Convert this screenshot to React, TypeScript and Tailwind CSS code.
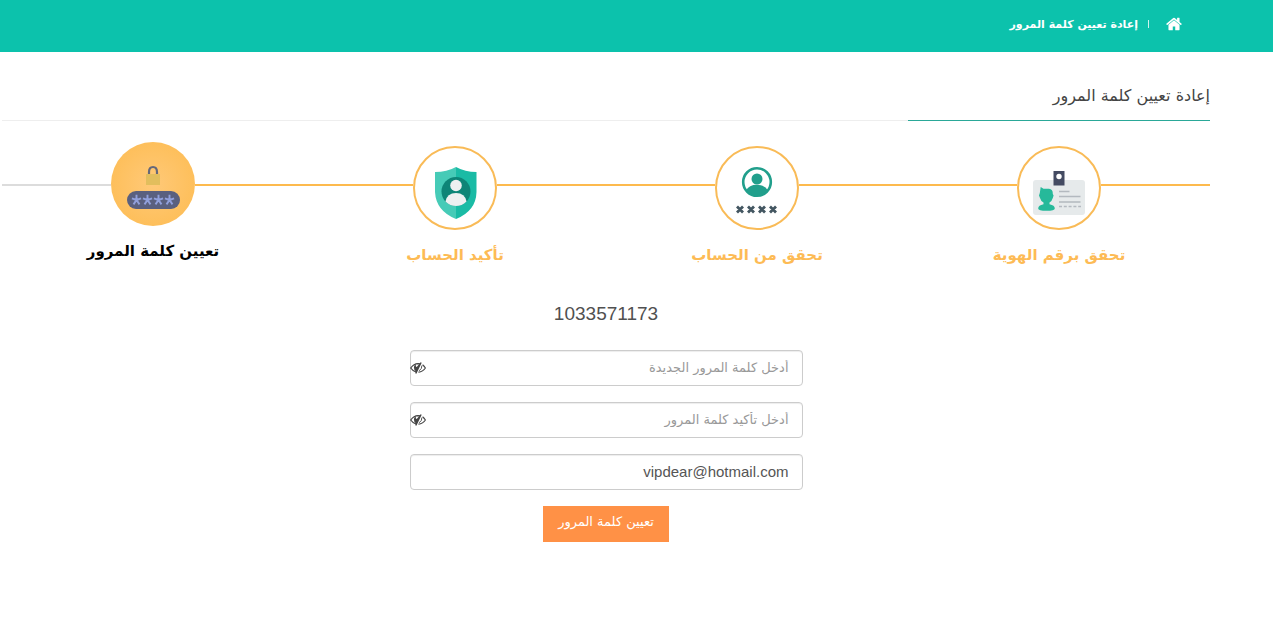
import { useState } from "react";
import type { ReactNode } from "react";

function HomeIcon() {
  return (
    <svg viewBox="64 64 1664 1664" className="size-4" fill="currentColor" aria-hidden="true">
      <path d="M1472 992v480q0 26-19 45t-45 19h-384v-384h-256v384h-384q-26 0-45-19t-19-45v-480q0-1 .5-3t.5-3l575-474 575 474q1 2 1 6zm223-69l-62 74q-8 9-21 11h-3q-13 0-21-7l-692-577-692 577q-12 8-24 7-13-2-21-11l-62-74q-8-10-7-23.500t11-21.500l719-599q32-26 76-26t76 26l244 204v-195q0-14 9-23t23-9h192q14 0 23 9t9 23v408l219 182q10 8 11 21.500t-7 23.500z" />
    </svg>
  );
}

function IdCardIcon() {
  return (
    <svg viewBox="2 2 80 80" className="size-full" aria-hidden="true">
      <rect x="16" y="34" width="52" height="35" rx="3" fill="#e6eaeb" />
      <rect x="36.500" y="25" width="11" height="14.500" fill="#444b62" />
      <circle cx="42" cy="30.500" r="2.700" fill="#fff" />
      <path
        d="M23.700 41 L26.500 42.800 H32 Q36 43.200 35.800 48 L36.600 49.500 L35.800 52 Q34.800 55.500 32.500 56.500 V58.300 Q37.800 59.300 37.800 62.500 Q37.800 64.800 29.500 64.800 Q21.200 64.800 21.200 62.500 Q21.200 59.300 26.500 58.300 V56.500 Q24 55.500 23 52 L22 49.500 L22.800 47 Z"
        fill="#26b99a"
      />
      <path d="M42 45.500 H52.500 M42 50.500 H63.500 M42 56 H63.500" stroke="#b3b9bf" strokeWidth="1.600" />
      <path d="M42 60.500 H64" stroke="#b3b9bf" strokeWidth="1.600" strokeDasharray="3 1.800" />
    </svg>
  );
}

function AccountIcon() {
  return (
    <svg viewBox="2 2 80 80" className="size-full" aria-hidden="true">
      <circle cx="42" cy="36" r="13.800" fill="#fff" stroke="#219f8c" strokeWidth="2.600" />
      <circle cx="42" cy="33" r="5.500" fill="#219f8c" />
      <path d="M31 44.500 Q34 38.800 42 38.800 Q50 38.800 53 44.500 Q48 50 42 50 Q36 50 31 44.500 Z" fill="#219f8c" />
      <path
        d="M22 60.500 L28 66.500 M28 60.500 L22 66.500 M33 60.500 L39 66.500 M39 60.500 L33 66.500 M44 60.500 L50 66.500 M50 60.500 L44 66.500 M55 60.500 L61 66.500 M61 60.500 L55 66.500"
        stroke="#435661"
        strokeWidth="2.800"
      />
    </svg>
  );
}

function ShieldIcon() {
  return (
    <svg viewBox="2 2 80 80" className="size-full" aria-hidden="true">
      <path d="M43 21 Q52 26 63.500 26 V46 Q63 65 43 73 Z" fill="#1abba5" />
      <path d="M43 21 Q34 26 22 26 V46 Q23 65 43 73 Z" fill="#46cbb7" />
      <circle cx="43" cy="45.500" r="14.500" fill="#0e8577" />
      <circle cx="43" cy="39.500" r="5.800" fill="#eef0f1" />
      <path d="M32.500 55.500 Q34 47 43 47 Q52 47 53.500 55.500 Q49 60 43 60 Q37 60 32.500 55.500 Z" fill="#eef0f1" />
    </svg>
  );
}

function Star({ x }: { x: number }) {
  return (
    <path
      d={`M${x} 58 V52.800 M${x} 58 L${x - 4.6} 56.300 M${x} 58 L${x + 4.6} 56.300 M${x} 58 L${x - 3} 62.400 M${x} 58 L${x + 3} 62.400`}
      stroke="#91a0dc"
      strokeWidth="1.900"
    />
  );
}

function PasswordIcon() {
  return (
    <svg viewBox="0 0 84 84" className="size-full" aria-hidden="true">
      <path d="M38 33 V30 Q38 25 42 25 Q46 25 46 30 V33" fill="none" stroke="#666879" strokeWidth="2.200" />
      <rect x="35" y="32" width="14" height="11" fill="#e2be5d" />
      <rect x="16" y="49" width="53" height="18" rx="9" fill="#5a607f" />
      <Star x={25.5} />
      <Star x={36.5} />
      <Star x={47.5} />
      <Star x={58.5} />
    </svg>
  );
}

function EyeOffIcon() {
  return (
    <svg viewBox="0 0 16 12" className="h-3 w-4" aria-hidden="true">
      <path d="M6.500 10.200 Q3 9.400 0.700 6 Q3.800 1.700 8 1.600 L10 1.900" fill="none" stroke="#444" strokeWidth="1.200" />
      <path d="M12.600 2.700 Q14.200 4 15.400 6 Q13 9.600 8.400 10.300" fill="none" stroke="#444" strokeWidth="1.100" />
      <path d="M10.600 0.200 L11.700 0.800 L6.400 11.800 L5.200 11.300 L5.900 9.200 Q3.800 8 3.900 5.300 Q4 3.300 5.700 2 L5.900 4.600 L6.700 5 L9.300 2 Z" fill="#444" />
      <path d="M11.800 3.600 Q12.400 6.800 8.900 8.900" fill="none" stroke="#444" strokeWidth="0.900" />
    </svg>
  );
}

type StepItem = { label: string; icon: ReactNode; active?: boolean };

const steps: StepItem[] = [
  { label: "تحقق برقم الهوية", icon: <IdCardIcon /> },
  { label: "تحقق من الحساب", icon: <AccountIcon /> },
  { label: "تأكيد الحساب", icon: <ShieldIcon /> },
  { label: "تعيين كلمة المرور", icon: <PasswordIcon />, active: true },
];

function Step({ label, icon, active }: StepItem) {
  return (
    <li className="flex flex-1 flex-col items-center" aria-current={active ? "step" : undefined}>
      <div className="flex w-full items-start">
        <span className="mt-[42px] h-0.5 flex-1 bg-[#fdba4d]" />
        <span
          className={
            active
              ? "size-[84px] rounded-full bg-[radial-gradient(circle,#ffc978,#fdbb4f)]"
              : "mt-1 size-[84px] rounded-full border-2 border-[#f9bb57] bg-white"
          }
        >
          {icon}
        </span>
        <span className={active ? "mt-[42px] h-0.5 flex-1 bg-[#dcdcdc]" : "mt-[42px] h-0.5 flex-1 bg-[#fdba4d]"} />
      </div>
      <span
        className={
          active
            ? "mt-[13px] text-[15px] leading-6 font-bold text-black"
            : "mt-[13px] text-[15px] leading-6 font-bold text-[#fdbb55]"
        }
      >
        {label}
      </span>
    </li>
  );
}

const inputClass =
  "h-9 w-full rounded-sm border border-[#ccc] bg-white px-[13px] pb-0.5 text-right leading-7 text-[#555] shadow-[inset_0_1px_1px_rgba(0,0,0,0.075)] outline-none placeholder:text-[#999]";

function PasswordField({ label }: { label: string }) {
  const [shown, setShown] = useState(false);
  return (
    <div className="relative">
      <input
        aria-label={label}
        type={shown ? "text" : "password"}
        placeholder={label}
        className={`${inputClass} text-[13px]`}
      />
      <button
        type="button"
        aria-label="إظهار كلمة المرور"
        onClick={() => setShown(!shown)}
        className="absolute inset-y-0 left-0 flex items-center"
      >
        <EyeOffIcon />
      </button>
    </div>
  );
}

export default function App() {
  return (
    <div dir="rtl" className="bg-white font-['DejaVu_Sans','Liberation_Sans',sans-serif] text-[#444]">
      <header className="flex h-13 items-center bg-[#0cc2ac] pr-[91px] pb-1 text-white">
        <a href="#home" aria-label="الرئيسية">
          <HomeIcon />
        </a>
        <span className="mr-[17px] ml-2.5 h-2 w-px bg-white/80" />
        <span className="pt-0.5 text-[11px] leading-5 font-bold">إعادة تعيين كلمة المرور</span>
      </header>

      <main className="pr-[63px] pl-0.5">
        <div className="flex items-end border-b border-[#eee] pt-8">
          <h1 className="-mb-px w-1/4 border-b border-[#2aa898] pb-3 text-base leading-6 font-medium">
            إعادة تعيين كلمة المرور
          </h1>
        </div>

        <ol className="mt-[21px] flex">
          {steps.map((step) => (
            <Step key={step.label} {...step} />
          ))}
        </ol>

        <form
          onSubmit={(event) => event.preventDefault()}
          className="mx-auto mt-[35px] flex w-full max-w-[393px] flex-col gap-4"
        >
          <p className="mb-2 text-center font-['Liberation_Sans',sans-serif] text-[19px] leading-6 text-[#505050]">
            1033571173
          </p>
          <PasswordField label="أدخل كلمة المرور الجديدة" />
          <PasswordField label="أدخل تأكيد كلمة المرور" />
          <input
            type="email"
            dir="ltr"
            aria-label="البريد الإلكتروني"
            defaultValue="vipdear@hotmail.com"
            className={`${inputClass} font-['Liberation_Sans',sans-serif] text-[15px]`}
          />
          <button
            type="submit"
            className="h-9 self-center bg-[#ff9146] px-[15px] pb-1 text-[13px] text-white"
          >
            تعيين كلمة المرور
          </button>
        </form>
      </main>
    </div>
  );
}
